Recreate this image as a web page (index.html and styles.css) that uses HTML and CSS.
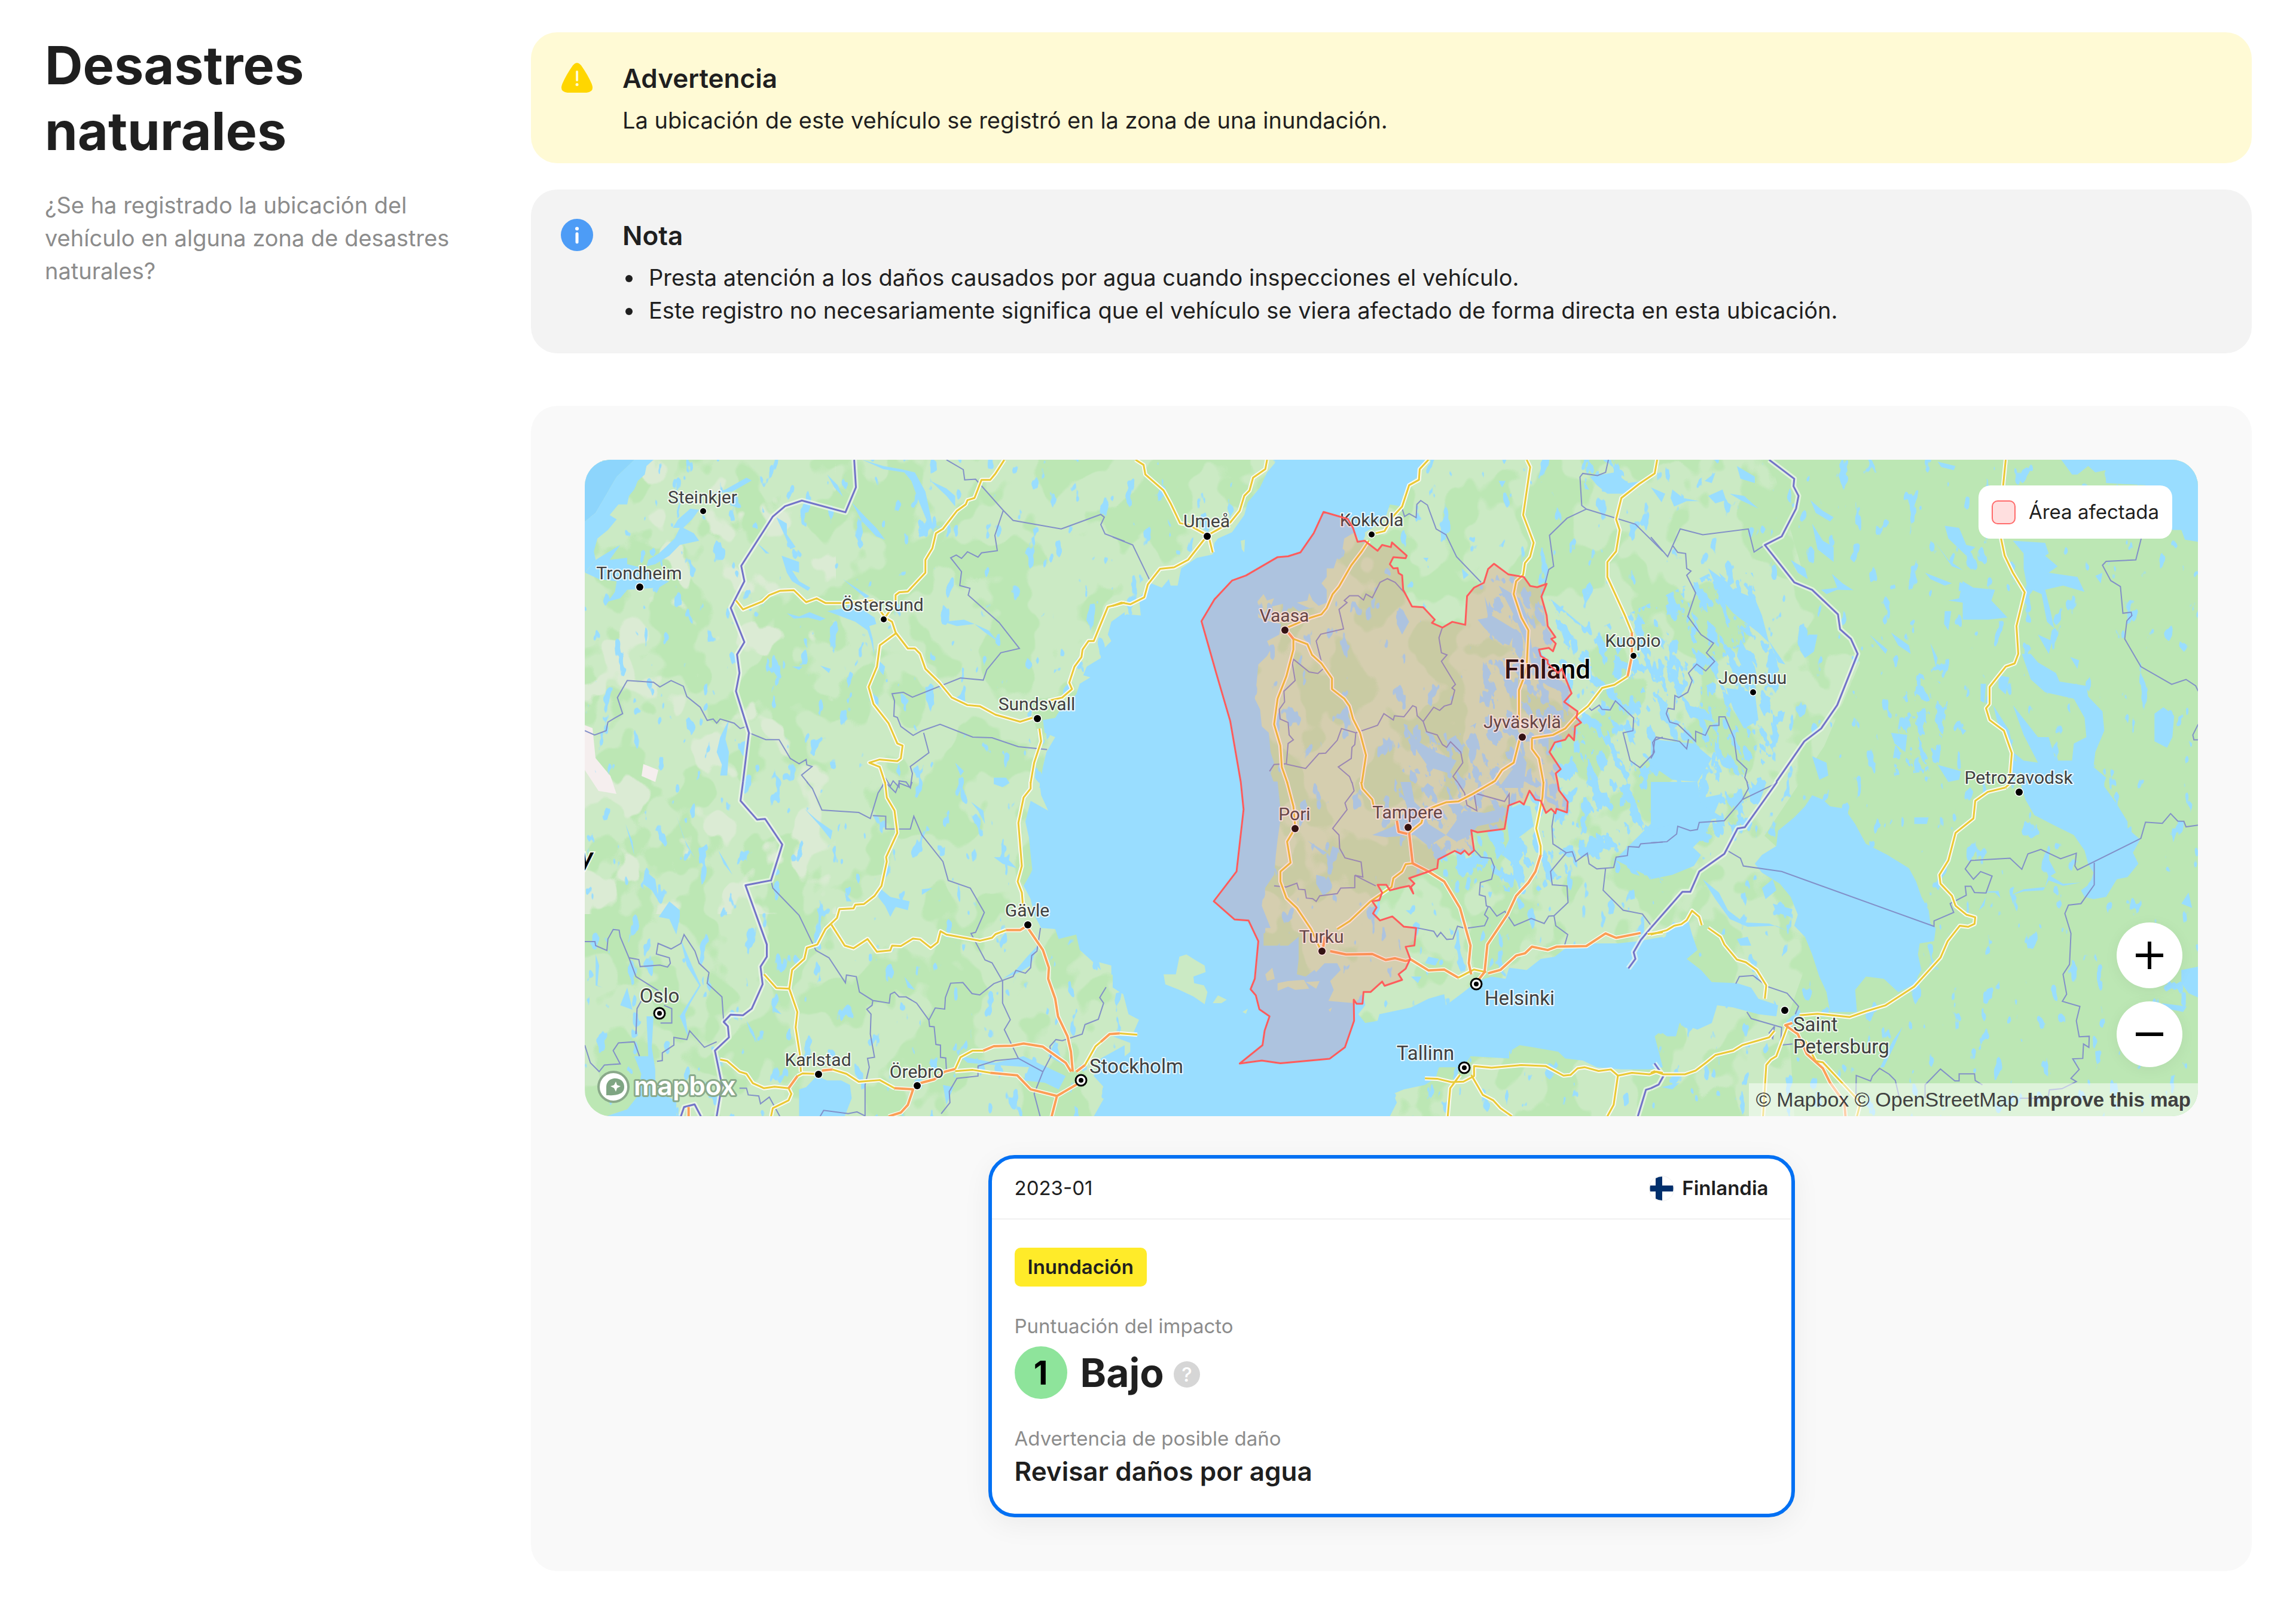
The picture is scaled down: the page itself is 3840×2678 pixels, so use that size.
FILE: index.html
```html
<!DOCTYPE html>
<html lang="es">
<head>
<meta charset="utf-8">
<meta name="viewport" content="width=device-width, initial-scale=1">
<title>Desastres naturales</title>
<link rel="stylesheet" href="styles.css">
</head>
<body>
<main class="section">
  <header class="intro">
    <h1 class="intro-title">Desastres naturales</h1>
    <p class="intro-text">¿Se ha registrado la ubicación del vehículo en alguna zona de desastres naturales?</p>
  </header>

  <div class="content">
    <section class="notice notice-warning">
      <svg class="notice-icon" viewBox="0 0 54 54" aria-hidden="true">
        <path d="M20 6.500Q27-2 34 6.500Q45 22 51.500 37Q57 51 43 52H11Q-3 51 2.500 37Q9 22 20 6.500Z" fill="#ffd600"/>
        <path d="M27 17v14" stroke="#fffad5" stroke-width="4" stroke-linecap="round"/>
        <circle cx="27" cy="38.500" r="2.500" fill="#fffad5"/>
      </svg>
      <div class="notice-body">
        <h2 class="notice-title">Advertencia</h2>
        <p class="notice-text">La ubicación de este vehículo se registró en la zona de una inundación.</p>
      </div>
    </section>

    <section class="notice notice-info">
      <svg class="notice-icon" viewBox="0 0 54 54" aria-hidden="true">
        <circle cx="27" cy="27" r="27" fill="#4d9cf6"/>
        <circle cx="27" cy="16.500" r="3" fill="#fff"/>
        <path d="M27 25v14" stroke="#fff" stroke-width="5" stroke-linecap="round"/>
      </svg>
      <div class="notice-body">
        <h2 class="notice-title">Nota</h2>
        <ul class="notice-list">
          <li>Presta atención a los daños causados por agua cuando inspecciones el vehículo.</li>
          <li>Este registro no necesariamente significa que el vehículo se viera afectado de forma directa en esta ubicación.</li>
        </ul>
      </div>
    </section>

    <section class="panel">
      <div class="map">
        <svg class="map-canvas" viewBox="977 771 2698 1098" preserveAspectRatio="xMidYMid slice" role="img" aria-label="Mapa del área afectada">
          <defs>
            <filter id="forest" x="0" y="0" width="1" height="1" color-interpolation-filters="sRGB">
              <feTurbulence type="fractalNoise" baseFrequency="0.011 0.010" numOctaves="3" seed="4"/>
              <feColorMatrix values="0 0 0 0 .737  0 0 0 0 .906  0 0 0 0 .706  26 0 0 0 -13.200"/>
            </filter>
            <filter id="pale" x="0" y="0" width="1" height="1" color-interpolation-filters="sRGB">
              <feTurbulence type="fractalNoise" baseFrequency="0.013 0.011" numOctaves="3" seed="21"/>
              <feColorMatrix values="0 0 0 0 .859  0 0 0 0 .922  0 0 0 0 .831  24 0 0 0 -14.200"/>
            </filter>
            <filter id="lakes-few" x="0" y="0" width="1" height="1" color-interpolation-filters="sRGB">
              <feTurbulence type="fractalNoise" baseFrequency="0.042 0.022" numOctaves="3" seed="9"/>
              <feColorMatrix values="0 0 0 0 .6  0 0 0 0 .867  0 0 0 0 1  34 0 0 0 -23.200"/>
            </filter>
            <filter id="lakes-many" x="0" y="0" width="1" height="1" color-interpolation-filters="sRGB">
              <feTurbulence type="fractalNoise" baseFrequency="0.060 0.030" numOctaves="4" seed="14"/>
              <feColorMatrix values="0 0 0 0 .6  0 0 0 0 .867  0 0 0 0 1  34 0 0 0 -18.900"/>
            </filter>
            <clipPath id="lakeland">
              <path d="M2600 1010L2660 1060L2780 1000L2860 960L2930 960L2960 1080L2990 1170L2960 1290L2930 1380L2880 1430L2820 1440L2780 1480L2660 1440L2560 1500L2440 1480L2400 1440L2370 1380L2330 1330L2340 1210L2420 1240L2470 1210L2490 1000L2560 980Z"/>
              <path d="M2640 771H2730L2720 830L2650 820ZM3190 1120L3260 1150L3240 1290L3160 1300Z"/>
            </clipPath>
            <clipPath id="karelia"><path d="M2640 1400L2930 1310L2960 1330L2880 1440L2820 1500L2760 1490Z"/></clipPath>

            <g id="roads-main">
              <g transform="matrix(.5867 0 0 .3571 960 760)">
                <path d="M1225 31L1200 95 1185 125 1160 125 1140 210 1120 220 1115 240 1090 270 1050 355 1030 375 1020 445 1000 500 1000 560 950 648 925 652 915 665 915 700 885 770 905 790 915 840 950 915 970 915 985 940 1000 1010 1040 1075 1075 1145 1120 1180 1155 1185 1200 1225 1270 1258 1305 1240"/>
                <path d="M460 690L480 732 535 695 555 665 585 645 625 642 660 698 690 680 715 702 770 702 850 690 885 770M915 845L870 900 862 1000 838 1095 852 1175 895 1265 920 1360 935 1370 930 1430 920 1443 870 1435 840 1450 870 1470 885 1545"/>
                <path d="M1568 700L1540 712 1520 720 1500 800 1480 880 1465 880 1448 920 1445 955 1425 1000 1410 1075 1418 1105 1390 1145 1350 1160M1325 1290L1330 1350 1310 1450 1300 1545"/>
              </g>
              <g transform="matrix(.5867 0 0 .3699 960 1310)">
                <path d="M885 0L890 70 912 130 920 230 888 340 890 360 875 470 855 515 825 552 800 555 795 572 755 575 748 615 715 665 692 735 662 750 655 800 620 850 612 935 635 1040 630 1110 642 1230 645 1310"/>
                <path d="M732 645L770 740 795 752 835 710 862 768 900 762 905 740 930 742 965 708 985 712 1015 750 1035 725 1043 675 1060 690 1155 718 1190 705 1200 688 1230 670M1300 0L1300 30 1280 70 1265 185 1275 380 1263 450 1275 500 1280 600M540 870L575 932 612 935"/>
                <path d="M415 1255L435 1262 470 1310 490 1320 508 1362 540 1385 570 1378 610 1385 618 1410 610 1440 565 1475 560 1512M635 1330L650 1318 690 1320M735 1300L775 1320 810 1356 870 1348 912 1385M1085 1298L1100 1245 1135 1215 1165 1215M1085 1308L1135 1302 1185 1315M1455 1280L1485 1195 1500 1175"/>
              </g>
              <g transform="matrix(.5867 0 0 .3571 1860 760)">
                <path d="M440 31L435 75 400 115 390 175 375 200 362 270 335 325 270 385 215 500 175 535 135 542 100 615 90 675 50 708 25 700 0 715M65 31L88 55 93 100 145 175 165 235 192 328 215 335 265 380M275 400L285 465"/>
                <path d="M900 31L875 75 873 125 845 150 825 250 800 295 775 365 750 375M730 410L710 460 680 525 645 625 627 660 610 725 595 755 565 770 500 815"/>
                <path d="M515 870L515 920 495 1045 470 1150 460 1270 478 1370 482 1470 498 1545M515 870L555 895 568 945 595 985 625 1055 625 1105 660 1150 675 1185 685 1245 705 1310 722 1415 710 1545"/>
                <path d="M1180 31L1190 65 1170 290 1200 420 1190 485 1175 515 1170 570 1150 600 1143 660 1165 770 1185 830 1180 1000 1170 1060 1158 1110 1158 1290M1160 1340L1143 1450 1110 1485 1090 1535 1080 1545M1195 1335L1195 1385 1215 1430 1228 1545M1195 1335L1255 1320 1290 1290 1325 1225 1355 1185 1395 1100 1430 1085 1468 1045"/>
                <path d="M1480 840L1460 760 1410 580 1410 510 1435 460 1445 360 1435 310 1450 210 1500 145 1545 95 1552 31"/>
              </g>
              <g transform="matrix(.5867 0 0 .3699 1860 1310)">
                <path d="M497 0L515 110 520 200 512 230 497 270 507 365 478 405 478 450 495 525 525 570 565 665 590 750M708 0L712 30 740 80 745 120M845 230L880 185 890 130 920 110 950 92 985 88 1025 55 1085 0M1228 0L1225 70 1207 210 1220 290 1220 330"/>
                <path d="M855 368L835 372 825 405 800 435 795 475 735 540 675 630 640 665M985 885L1030 848 1065 860M1525 688L1568 680M20 1137L70 1143"/>
                <path d="M890 1340L925 1342 965 1357 1000 1355 1030 1330 1030 1285 1080 1292 1165 1280 1235 1285 1285 1328 1305 1325 1325 1295 1345 1290 1385 1307 1420 1300 1440 1328 1480 1315 1530 1322 1550 1310 1568 1315M990 1325L962 1385 955 1512M1022 1325L1055 1415 1085 1440 1105 1475 1138 1512M1440 1328L1428 1460 1410 1512"/>
              </g>
              <g transform="matrix(.5995 0 0 .3571 2760 760)">
                <path d="M990 31L983 150 977 400 987 480 1010 560 1043 652 1020 810 1025 940 1015 985 990 1000 945 1095 945 1175 935 1195 945 1250 985 1300 1007 1405 1000 1550 990 1565"/>
              </g>
              <g transform="matrix(.5995 0 0 .3699 2760 1310)">
                <path d="M990 25L940 45 905 85 900 165 850 230 830 355 805 420 808 460 840 515 850 560 880 600 905 612 903 642 885 655 862 650 828 720 808 795 735 925 655 1010 600 1037 555 1063 465 1048 415 1055"/>
                <path d="M0 690L45 670 65 650 85 643 100 625 115 582 135 610 142 648M160 660L195 700 205 735 240 803 265 815 295 850 322 920 318 980M380 1110L350 1240 335 1255 322 1280 313 1512M345 1125L330 1155 255 1190 230 1215 180 1235 155 1268 125 1305 95 1322 35 1322 10 1308 0 1315M430 1170L460 1262 480 1268 585 1450 575 1512"/>
              </g>
            </g>

            <g id="roads-motorway">
              <g transform="matrix(.5867 0 0 .3699 960 1310)">
                <path d="M1230 670L1270 670 1290 650M1292 660L1335 760 1352 840 1350 890 1370 980 1378 1060 1405 1150 1415 1220 1420 1310M610 1385L635 1330M705 1305L735 1300M912 1385L965 1390 950 1460 930 1495 895 1512M985 1362L1025 1345 1055 1310 1085 1298M1165 1215L1195 1195 1245 1193 1280 1183 1335 1197 1400 1270 1415 1310M1185 1315L1262 1327 1300 1390 1375 1420 1440 1360M1375 1420L1360 1512M1430 1310L1455 1280M1500 1175L1525 1140 1554 1137M325 1512L325 1470"/>
              </g>
              <g transform="matrix(.5867 0 0 .3571 1860 760)">
                <path d="M500 840L515 870M1468 1045L1480 950 1480 840"/>
              </g>
              <g transform="matrix(.5867 0 0 .3699 1860 1310)">
                <path d="M810 175L815 225 840 235M845 230L855 368 900 405 945 450 990 570 1020 740 1015 820 1022 870M1220 330L1205 405 1185 455 1150 515 1125 600 1068 735 1060 860 1035 910M605 700L600 745M620 765L665 780 740 778 778 805 805 797 835 810 850 803 900 852 945 848 985 885M1070 865L1105 850 1150 785 1175 775 1195 745 1240 760 1265 745 1350 742 1405 685 1435 705 1505 683"/>
              </g>
              <g transform="matrix(.5995 0 0 .3699 2760 1310)">
                <path d="M395 1090L375 1100 410 1140 435 1230 480 1295 500 1360 540 1450 543 1512"/>
              </g>
            </g>

            <g id="national">
              <path transform="matrix(.5867 0 0 .3571 960 760)" d="M797 31L802 160 772 277 648 222 600 248 565 297 475 528 484 600 445 725 484 885 463 943 470 1030 460 1115 497 1310 480 1540"/>
              <path transform="matrix(.5867 0 0 .3699 960 1310)" d="M480 0L473 85 520 170 543 167 592 283 560 445 487 467 548 735 548 790 530 835 536 915 505 1025 480 1055 445 1052 425 1085 437 1105 440 1155 400 1215 420 1370 405 1512M303 1512L312 1470 342 1458 360 1512"/>
              <path transform="matrix(.5995 0 0 .3571 2760 760)" d="M330 31L400 120 398 155 412 200 405 260 365 390 318 430 400 605 450 640 522 755 528 825 558 870 577 940 520 1180 475 1290 428 1350 350 1540"/>
              <path transform="matrix(.5995 0 0 .3699 2760 1310)" d="M352 0L262 205 242 210 205 325 135 405 110 497 88 497 0 660M10 1272L35 1330 22 1368 0 1385"/>
              <path transform="matrix(.5867 0 0 .3699 1860 1310)" d="M1534 660L1505 715 1485 770 1490 800 1470 843M1534 1385L1520 1392 1497 1512"/>
            </g>
          </defs>

          <rect class="land" x="977" y="771" width="2698" height="1098"/>
          <path class="forest" d="M2960 771H3676V1869H3000L2990 1700L3060 1500L2950 1400L3050 1250L3110 1110L3020 980Z"/>
          <rect filter="url(#forest)" x="977" y="771" width="2698" height="1098"/>
          <rect filter="url(#pale)" x="977" y="771" width="420" height="760"/>
          <path class="snow" d="M977 1215L990 1220L995 1270L1020 1300L1030 1330L1000 1325L977 1290ZM1075 1280L1100 1290L1095 1310L1072 1300Z"/>
          <rect filter="url(#lakes-few)" x="977" y="771" width="2698" height="1098"/>
          <g clip-path="url(#lakeland)"><g transform="rotate(-18 2640 1240)"><rect filter="url(#lakes-many)" x="2100" y="600" width="1300" height="1200"/></g></g>
          <g clip-path="url(#karelia)"><path class="water" d="M2700 1440L2760 1380L2830 1340L2880 1330L2850 1400L2810 1440L2760 1470Z"/></g>

          <g class="water">
            <g transform="matrix(.5867 0 0 .3571 960 760)">
              <path class="deep" d="M29 31H170L120 110 60 280 29 320Z"/>
              <path d="M225 31L205 60 200 100 180 130 170 170 155 200 150 240 125 240 100 290 120 310 95 360 65 400 55 460 60 500 29 560 29 320 60 280 120 110 170 31Z"/>
              <path d="M330 260L355 265 335 310 310 350 340 375 355 410 300 430 270 480 230 520 205 530 210 500 240 470 260 440 285 400 300 350 280 350 295 310ZM60 500L130 430 100 500 150 490 150 520 200 540 230 590 270 600 240 630 150 640 130 680 95 695 115 650 120 600 70 590 30 560ZM430 170L490 115 505 128 450 180 390 190Z"/>
              <path d="M1568 745L1530 790 1520 850 1530 880 1500 930 1500 960 1460 1000 1450 1040 1470 1050 1440 1080 1430 1130 1400 1180 1385 1200 1370 1240 1335 1250 1340 1310 1370 1330 1345 1400 1335 1470 1325 1568H1568Z"/>
              <path d="M720 740L790 720 790 700 855 770 860 800 840 810 850 870 855 950 845 880 835 830 800 790ZM590 480L640 510 640 560 620 550 640 600 672 630 665 645 620 600 605 560ZM860 960L885 1000 880 1040 900 1080 870 1020ZM765 590L840 670 830 680ZM820 31L880 60 930 75 970 90 1000 180 1025 370 1010 340 980 220 960 130 940 90 880 75ZM1015 130L1060 165 1085 200 1085 250 1060 200ZM575 300L605 330 605 380 630 440 615 450 600 390ZM790 230L830 300 860 350 885 405 860 390 820 320ZM520 420L555 470 545 470ZM605 750L640 765 670 745 715 775 700 785 665 770 625 775ZM1050 790L1110 780 1140 800 1090 810ZM1140 800L1180 830 1205 880 1170 840ZM720 100L750 150 765 205 740 160ZM440 1250L430 1340 440 1400 435 1510 415 1510 420 1460 405 1400 415 1330 430 1280ZM1195 1520L1230 1520 1240 1545 1220 1565 1195 1550ZM1085 1450L1110 1490 1100 1510ZM700 995L730 1010 725 1030ZM620 1000L650 1000 640 1015Z"/>
            </g>
            <g transform="matrix(.5867 0 0 .3699 960 1310)">
              <path d="M1325-2L1330 60 1350 130 1300 85 1285 180 1295 250 1300 330 1305 400 1280 470 1300 530 1310 600 1330 660 1370 665 1380 710 1430 690 1440 760 1475 810 1500 850 1495 815 1530 830 1530 870 1568 900V-2Z"/>
              <path d="M640 1512L640 1390 660 1380 690 1330 720 1350 760 1350 785 1370 790 1430 770 1512ZM205 1060L225 1060 220 1200 230 1300 230 1400 290 1440 290 1512 90 1512 150 1480 180 1420 190 1320 170 1240 210 1240ZM870 480L900 520 955 540 950 580 915 565 900 610 885 560 865 520ZM1568 1190L1500 1250 1480 1330 1520 1400 1480 1512H1568ZM1220 890L1258 850 1290 790 1320 740 1300 830 1270 860ZM1100 1240L1200 1270 1280 1240 1400 1330 1380 1390 1340 1360 1280 1350 1300 1290 1200 1280 1120 1270ZM1350 1240L1370 1170 1385 1240 1420 1300ZM1050 1370L1080 1380 1060 1460ZM270 540L300 580 300 610 290 690 270 620 240 610ZM200 400L230 440 240 540 220 490 195 460ZM300 700L340 850 360 920 330 1000 315 1050 325 1160 300 1060 355 920 320 830ZM150 930L165 1030 130 1010ZM1130 90L1165 130 1170 190 1150 130ZM1195 340L1230 340 1260 390 1220 370ZM990 485L1020 480 990 510ZM655 120L690 170 735 220 730 260 700 200ZM770 500L790 540 775 540ZM410 310L430 360 450 420 425 370ZM290 150L310 250 345 350 320 290ZM145 190L165 270 170 330ZM60 780L70 830 65 920 80 930 60 920ZM490 1080L510 1130 520 1180 500 1130ZM940 880L970 940 950 930ZM560 1000L590 1050 570 1040Z"/>
            </g>
            <g transform="matrix(.5867 0 0 .3571 1860 760)">
              <path d="M470 31L440 90 420 160 385 230 375 290 340 370 300 400 290 420 285 475 240 490 195 540 185 620 165 620 160 590 140 630 110 610 75 680 80 760 40 755 10 780 0 785V1568H465L450 1500 460 1450 450 1400 445 1310 425 1280 420 1200 405 1150 410 1080 415 990 440 950 450 920 440 880 475 850 480 800 450 790 415 770 410 700 430 660 440 690 460 680 450 720 500 700 530 740 580 720 610 700 610 640 595 610 610 580 610 540 630 540 640 490 655 450 660 400 690 370 700 400 720 370 750 340 780 290 790 240 825 250 825 210 840 150 870 110 890 31Z"/>
              <path d="M810 740L825 730 845 790 825 850 810 800ZM1100 620L1160 680 1180 760 1200 960 1230 960 1250 1040 1290 1080 1300 1130 1240 1090 1200 1040 1190 960 1170 860 1150 780ZM1060 670L1080 760 1150 830 1130 900 1100 880 1060 820 1040 780 1070 770ZM1150 1360L1180 1450 1170 1568 1100 1568 1140 1480ZM830 1270L870 1350 920 1400 980 1440 960 1500 900 1470 870 1400ZM1360 110L1430 90 1470 140 1510 130 1470 190 1410 190 1380 150ZM995 540L1015 570 1000 590ZM885 490L900 490 895 510ZM1100 130L1120 130 1110 160Z"/>
            </g>
            <g transform="matrix(.5867 0 0 .3699 1860 1310)">
              <path d="M0-2H470L480 150 470 260 465 330 460 420 430 490 425 560 440 620 450 660 430 660 430 740 500 740 530 700 530 800 525 870 550 880 600 820 640 820 650 850 620 900 630 940 615 990 690 1000 715 960 720 1010 700 1050 720 1090 755 1080 760 1050 850 1020 900 980 945 960 950 1010 1000 950 1040 900 1080 880 1120 890 1130 840 1180 850 1220 800 1260 790 1300 740 1370 730 1440 730 1500 720 1568 700V1120L1545 1150 1560 1240 1568 1290 1530 1300 1450 1300 1380 1290 1340 1260 1290 1250 1270 1220 1200 1200 1160 1190 1130 1220 1130 1250 1020 1240 1000 1290 930 1290 920 1340 890 1370 830 1390 800 1410 810 1450 790 1512H0V1330L20 1260 50 1220 50 1180 0 1150 75 1145 60 1130 75 1075 45 1050 30 960 0 930Z"/>
              <path d="M820 0L850 0 860 90 880 120 900 190 950 240 900 290 860 240 780 250 740 240 800 200 840 120ZM1000 130L1060 140 1110 120 1100 180 1040 200 1020 240 980 270 950 240ZM580 420L605 430 620 490 600 515 580 460ZM555 265L610 320 600 330ZM1120 130L1160 100 1190 110 1200 200 1150 260 1170 330 1150 380 1110 330 1130 260ZM1000 350L1040 330 1060 350 1010 380ZM835 580L860 580 850 600ZM1230 60L1260 80 1270 110 1240 90ZM900 790L930 800 920 830 890 820ZM850 880L880 880 870 910Z"/>
            </g>
            <g transform="matrix(.5995 0 0 .3571 2760 760)">
              <path d="M1145 31L1175 100 1190 100 1220 60 1240 90 1268 80 1270 140 1380 150 1455 360 1480 360 1490 405 1527 415V31Z"/>
              <path d="M1035 940L1060 940 1080 980 1130 1030 1140 1070 1215 1090 1220 1140 1260 1210 1265 1300 1240 1400 1235 1470 1270 1520 1260 1568H1050L1010 1400 1040 1440 1080 1450 1040 1320 1010 1180 1080 1330 1110 1330 1130 1440 1175 1440 1180 1360 1215 1330 1210 1240 1180 1150 1100 1120 1060 1060ZM870 600L900 630 960 640 950 690 995 770 940 780 870 780 870 700 830 690 860 680ZM1010 410L1100 420 1110 470 1100 480 1135 530 1110 560 1190 580 1210 650 1150 620 1100 640 1115 740 1125 820 1105 790 1090 660 1050 630 1040 540 1040 470ZM160 540L210 600 230 640 290 680 310 760 330 890 300 840 230 750 200 690ZM330 880L350 930 375 990 355 980ZM440 850L465 850 455 930 430 960 415 920ZM250 870L290 1000 300 1080 260 1020 240 950ZM445 220L480 270 510 300 500 320 460 280ZM450 330L480 410 510 440 510 510 465 450ZM820 340L860 350 880 430 905 440 880 480 830 400ZM790 410L830 500 870 548 840 530ZM390 500L430 540 438 590 410 560ZM505 565L535 610 565 642 520 640 490 660 475 640 520 630ZM765 560L840 610 820 620 780 590ZM820 740L838 740 830 830 818 800ZM610 850L660 920 655 940ZM670 840L720 900 725 940 690 900ZM780 890L800 960 795 1000ZM1405 1220L1430 1190 1460 1230 1455 1330 1440 1380 1405 1350ZM800 1460L865 1490 860 1530 830 1540ZM450 1420L490 1450 495 1510 470 1530ZM670 1310L715 1320 710 1400 680 1360ZM860 1280L880 1300 870 1320ZM0 160L40 190 30 230ZM60 170L90 210 135 225 100 225 65 250 55 210ZM160 200L200 170 210 220 180 235ZM220 190L260 200 300 260 250 220ZM240 60L290 110 290 140 250 120ZM150 130L180 90 170 140ZM1080 850L1120 880 1110 940ZM1170 955L1195 970 1190 1010ZM1240 575L1260 560 1255 610ZM920 1080L935 1080 930 1170 920 1160ZM970 1040L1000 1050 990 1130 970 1100ZM955 1180L1000 1300 1010 1390 970 1280ZM0 1340L120 1360 170 1430 130 1540 60 1530 0 1460ZM100 1180L150 1200 180 1260 110 1230ZM210 1100L290 1120 300 1250 260 1290 230 1200ZM800 40L850 60 845 80 810 65ZM190 560L210 590 200 600Z"/>
            </g>
            <g transform="matrix(.5995 0 0 .3699 2760 1310)">
              <path d="M0 730L40 700 60 660 105 630 115 690 130 760 100 800 140 850 170 905 240 910 280 930 300 980 355 1010 350 1060 300 1050 230 1020 185 1010 170 1090 130 1120 80 1090 70 1150 45 1150 20 1120 5 1160 20 1240 0 1280Z"/>
              <path d="M450 60L480 80 500 110 540 120 570 190 600 280 660 330 720 390 740 450 755 520 775 580 780 640 795 660 790 720 750 730 745 780 755 850 730 920 690 950 650 890 600 880 570 940 575 1040 500 1040 490 950 470 880 450 780 430 700 400 650 410 600 390 520 360 460 310 410 290 370 310 330 350 290 355 220 400 160 430 110Z"/>
              <path d="M1030-2L1045 80 1070 150 1130 200 1180 240 1210 310 1220 370 1235 410 1225 460 1200 490 1210 520 1235 530 1270 520 1300 440 1330 430 1360 370 1345 320 1365 260 1330 210 1330 180 1300 100 1265 20V-2ZM145 440L190 500 215 580 260 635 330 640 390 680 350 650 270 655 220 620 180 530ZM310 480L340 440 350 490 320 530ZM735 160L775 160 770 190 735 190ZM1095 370L1110 350 1130 410 1110 430ZM1000 515L1040 485 1100 475 1110 420 1150 460 1200 455 1150 470 1110 445 1095 490 1040 495ZM945 495L970 493 975 525 960 500 930 500ZM935 520L930 560 915 580ZM1480 850L1527 835V975L1500 955 1480 910ZM1425 1000L1495 1015 1485 1040 1440 1025ZM640 1290L675 1170 702 1108 680 1190 650 1290ZM1480 550L1500 500 1510 570ZM340 550L395 575 390 610 350 590ZM240 710L270 700 280 740 250 740ZM0 0H130L140 100 200 160 130 180 60 190 0 220ZM0 240L100 270 140 330 120 380 60 420 0 440ZM30 1380L80 1360 60 1390Z"/>
            </g>
          </g>

          <g class="islands">
            <g transform="matrix(.5867 0 0 .3699 1860 1310)">
              <path d="M190 790L210 780 240 810 262 830 265 860 230 880 232 910 260 920 270 950 262 1005 230 970 190 940 150 915 145 870 180 870ZM285 1000L300 965 325 985 310 1000ZM370 1040L385 1025 380 1048ZM0 930L20 950 0 960Z"/>
              <path d="M435 870L455 840 462 890 440 900ZM470 910L500 900 545 895 560 935 520 940 500 925 470 945ZM550 905L590 900 580 935ZM555 810L600 790 610 810 580 860ZM615 1030L625 1020 620 1040Z"/>
            </g>
            <g transform="matrix(.5867 0 0 .3571 1860 760)">
              <path d="M525 700L555 690 560 655 570 690 590 720 560 725ZM365 410L377 405 375 465 368 450Z"/>
            </g>
          </g>

          <g class="admin">
            <path transform="matrix(.5867 0 0 .3571 960 760)" d="M29 1300L57 1320 90 1300 95 1260 115 1240 137 1220 122 1145 150 1065 225 1073 243 1095 275 1065 310 1092 320 1140 358 1190 378 1252 395 1245 405 1265 415 1245 455 1265 472 1290 490 1280M497 1310L545 1342 583 1342 615 1430 640 1455 660 1435 662 1460 677 1468 647 1508 665 1545M1060 31L1108 77 1112 125 1143 122 1222 268 1250 315 1387 355 1500 287 1510 300 1500 335 1512 378 1568 413M1222 268L1198 385 1205 457 1160 467 1150 487 1120 462 1103 493 1088 477 1072 490 1103 555 1098 620 1127 633 1122 665 1210 793 1268 915 1215 935 1175 1015 1165 1063 1100 1053 963 1143 937 1120 905 1127 912 1160 910 1232 920 1238 930 1280 965 1322 990 1300 1042 1270 1135 1330 1190 1333 1265 1375 1347 1388M995 1310L1010 1403 957 1468 963 1500 957 1568 945 1540 925 1535 925 1565 908 1535 900 1560 887 1525 875 1568"/>
            <path transform="matrix(.5867 0 0 .3699 960 1310)" d="M662 0L678 30 705 127 810 138 843 165 865 50 885 0 915 48 925 5 957 25 962 0M850 152L887 155 887 212 957 213 967 155 990 240 1050 360 1065 445 1128 480 1168 590 1143 680 1130 685 1170 805 1190 818 1220 900 1220 1000 1242 1075 1225 1120 1265 1250 1335 1310M560 445L565 480 640 603 688 762 725 795 772 908 775 873 803 880 812 950 850 988 897 1000 900 960 912 950 925 972 945 972 975 1000 1010 1077 1028 1022 1055 1027 1057 975 1072 910 1107 907 1133 957 1155 963 1195 912 1250 880 1258 852 1285 865 1300 840 1303 785 1318 765 1328 660M1010 1077L1012 1105 1025 1107 1030 1187 1043 1190 1043 1245 1058 1248 1060 1305M850 988L848 1010 833 1028 845 1050 843 1140 855 1245 835 1250 840 1290 828 1370 828 1512M1515 928L1497 975 1508 1000 1493 1073 1455 1097 1447 1140 1390 1170 1372 1165 1355 1195 1358 1240 1335 1310 1310 1410 1327 1512M29 722L58 722 60 740 92 762 95 710 110 667 127 670 130 700 155 795 175 880 240 945M155 795L183 803 187 835 243 828 265 837 273 820 270 795 233 778 238 730 275 755 303 730 312 690 343 765 355 820 383 862 378 910 420 972 425 1085M190 990L178 1025 175 1140M245 1090L277 1090 277 1025 255 1010M29 1190L45 1270 70 1310 85 1280 130 1275 110 1215 125 1180 170 1175 185 1240M235 1263L250 1260 250 1225 283 1190 283 1155 320 1165 328 1125 370 1200 405 1175M1265 1250L1200 1260 1150 1285 1150 1330 1090 1340 1068 1400 1070 1450 1045 1500M470 1385L490 1385 495 1415 525 1420 530 1455 555 1425 585 1512M700 1512L710 1485 780 1500 805 1492 828 1510"/>
            <path transform="matrix(.5867 0 0 .3571 1860 760)" d="M0 393L57 430 108 603M825 260L832 297 845 283 865 302 867 240 878 222 897 243 922 355 950 382 980 485 1050 605M1413 31L1405 90 1382 105 1340 95 1332 112 1337 245 1350 262 1295 305 1245 385 1257 530 1243 545 1232 615M1350 262L1490 333 1568 460M835 660L805 605 783 588 762 605 740 677 722 660 715 688 700 668 675 668 660 690 668 700 645 732 658 823 593 848 580 880 600 1010 585 1032 560 1025 515 965 512 985 520 1065 488 1115 490 1165 475 1200 477 1245 500 1262 503 1320 515 1343 500 1360 495 1455 460 1458 447 1490M495 1457L550 1477 588 1407 607 1405 640 1345 652 1290 693 1310 690 1365 682 1378 680 1430 643 1470 675 1515 682 1545M693 1310L755 1275 773 1220 800 1250 803 1230 830 1235 855 1183 865 1190 868 1230 885 1257 895 1305 925 1320 940 1365 952 1378 963 1352 992 1400 998 1450 970 1515 985 1545M885 1257L915 1190 932 1205 945 1185 965 1175 975 1110 967 1100 977 1083 937 975 953 945 937 935 930 865 940 815M1330 1225L1355 1187 1365 1205 1387 1180 1395 1200 1418 1203 1433 1160 1485 1240 1483 1300 1455 1310 1475 1440 1503 1473 1540 1410 1545 1345 1568 1330"/>
            <path transform="matrix(.5867 0 0 .3699 1860 1310)" d="M682 0L688 40 662 95 668 125 627 210 645 240 647 300 662 343 708 362 713 430 690 422 750 470M690 422L690 478 650 480 640 505 590 515 580 540 570 528 552 525 548 487 530 485 525 458 495 475 460 470M985 5L1003 50 1010 105 1038 130 1030 50 1117 88 1130 55 1130 105M1030 305L1050 340 1078 345 1088 385 1080 440 1048 455 1045 510 1062 518 1065 560 1075 565 1095 607 1118 585 1145 650 1193 617 1230 640 1243 607 1258 605 1298 545 1295 470 1253 465 1248 405 1293 320 1255 280 1252 200 1258 140M1293 320L1310 315 1320 360 1353 322 1358 370 1380 393 1428 387 1435 340 1467 333 1470 292 1500 295 1505 280 1568 272M1405 390L1398 490 1455 580 1510 597 1535 650M1258 605L1263 650 1297 690 1287 745M868 660L915 675 925 700 935 680 952 712 970 710 983 652 1005 662 1060 650 1070 615 1060 600 1070 565"/>
            <path transform="matrix(.5995 0 0 .3571 2760 760)" d="M0 393L47 485 82 355 145 382 272 355 288 463 318 430M62 435L75 465 97 470 100 540 112 552 100 572 125 655 103 765 140 850 175 890 155 935 178 975 153 1020 128 988 105 1030 115 1065 103 1120 78 1145 67 1135 65 1200 48 1195 43 1220 53 1260 75 1270 125 1350 125 1303 152 1322 165 1277 190 1275 190 1235 207 1235 232 1335 240 1435 268 1480 262 1520 270 1545M0 1430L10 1400 5 1355 15 1330 80 1350 100 1385 105 1340M1368 400L1353 500 1270 507 1260 525 1283 597 1310 625 1317 750 1340 745 1342 760 1328 785 1322 870 1367 1000 1453 1083 1493 1060 1520 1090 1527 1115M1527 1270L1512 1320 1515 1343 1527 1343"/>
            <path transform="matrix(.5995 0 0 .3699 2760 1310)" d="M268 0L272 30 255 80M0 275L45 270 72 235 75 200 110 220 130 215 135 183 205 175 255 80 345 10M213 310L250 345 258 380 365 405 790 653 790 628 845 590 835 550 880 512 877 472 893 472 903 500 935 502 952 425 920 405 900 440 877 393 893 355 1002 345 1035 395 1052 325 1088 305 1143 347 1187 322 1183 380 1190 398 1367 255 1380 182 1427 187 1450 143 1470 177 1487 178 1493 203 1527 195M1237 365L1237 465 1200 550 1165 557 1155 595 1172 685 1168 825 1150 870 1160 960 1148 992 1197 1015 1187 1080 1195 1152 1223 1150 1222 1200 1207 1185 1205 1250 1177 1252 1195 1300 1172 1340 1187 1355 1147 1387 1112 1392 1108 1430 1030 1430M237 912L247 880 285 875 325 925 380 955 412 1015 403 1050M268 1040L280 1070 365 1110 362 1190 395 1185M345 1105L330 1135 340 1160 345 1105M572 1440L573 1327 613 1352 618 1330 638 1295 665 1322 682 1350 695 1440M765 1430L765 1370 808 1298 848 1352 860 1352 860 1320 903 1320 905 1350 925 1370"/>
          </g>

          <use href="#national" class="halo"/>
          <use href="#national" class="nation"/>
          <use href="#roads-main" class="casing"/>
          <use href="#roads-motorway" class="casing"/>
          <use href="#roads-main" class="road-main"/>
          <use href="#roads-motorway" class="road-motorway"/>

          <g class="dots">
            <circle cx="1175" cy="857" r="5"/><circle cx="1069" cy="984" r="6"/><circle cx="1477" cy="1038" r="5"/><circle cx="1734" cy="1204" r="6"/><circle cx="2018" cy="899" r="6"/><circle cx="2293" cy="896" r="5"/><circle cx="2148" cy="1056" r="6"/><circle cx="2731" cy="1099" r="5"/><circle cx="2545" cy="1235" r="6"/><circle cx="2165" cy="1388" r="6"/><circle cx="2354" cy="1386" r="6"/><circle cx="2210" cy="1593" r="6"/><circle cx="2931" cy="1160" r="5"/><circle cx="3376" cy="1327" r="6"/><circle cx="2984" cy="1692" r="6"/><circle cx="1368" cy="1799" r="6"/><circle cx="1533" cy="1818" r="6"/><circle cx="1718" cy="1549" r="6"/>
          </g>
          <g class="capital-ring">
            <circle cx="1102" cy="1697" r="9"/><circle cx="1807" cy="1809" r="9"/><circle cx="2468" cy="1648" r="9"/><circle cx="2448" cy="1788" r="9"/>
          </g>
          <g>
            <circle cx="1102" cy="1697" r="4"/><circle cx="1807" cy="1809" r="4"/><circle cx="2468" cy="1648" r="4"/><circle cx="2448" cy="1788" r="4"/>
          </g>

          <g class="city">
            <text x="1174" y="844">Steinkjer</text>
            <text x="1068" y="971">Trondheim</text>
            <text x="1475" y="1024">Östersund</text>
            <text x="1733" y="1190">Sundsvall</text>
            <text x="2017" y="884">Umeå</text>
            <text x="2293" y="882">Kokkola</text>
            <text x="2147" y="1042">Vaasa</text>
            <text x="2730" y="1084">Kuopio</text>
            <text x="2545" y="1220">Jyväskylä</text>
            <text x="2164" y="1374">Pori</text>
            <text x="2353" y="1371">Tampere</text>
            <text x="2209" y="1579">Turku</text>
            <text x="2930" y="1146">Joensuu</text>
            <text x="3375" y="1313">Petrozavodsk</text>
            <text x="1367" y="1785">Karlstad</text>
            <text x="1532" y="1805">Örebro</text>
            <text x="1717" y="1535">Gävle</text>
          </g>
          <g class="city city-large">
            <text x="1102" y="1679">Oslo</text>
            <text class="from-left" x="1821" y="1797">Stockholm</text>
            <text class="from-left" x="2482" y="1683">Helsinki</text>
            <text x="2383" y="1775">Tallinn</text>
            <text class="from-left" x="2998" y="1727">Saint</text>
            <text class="from-left" x="2998" y="1764">Petersburg</text>
          </g>
          <text class="country" x="2587" y="1137">Finland</text>
          <text class="country country-slanted" x="980" y="1452">y</text>

          <path class="affected" transform="matrix(.5867 0 0 .3571 1860 760)" d="M601 275L670 308 685 350 698 415 718 410 755 457 768 430 793 440 796 418 838 480 835 492 800 487 790 520 800 540 812 538 815 562 825 572 828 640 853 718 885 722 918 780 910 795 940 817 968 790 1005 804 1010 670 1030 630 1058 607 1070 543 1087 518 1128 568 1172 580 1190 622 1210 628 1237 612 1222 672 1237 760 1240 810 1262 862 1250 870 1263 892 1255 928 1243 912 1215 920 1220 950 1240 970 1240 985 1270 1030 1280 1010 1308 1125 1287 1165 1325 1210 1322 1240 1335 1262 1318 1280 1315 1345 1300 1318 1290 1342 1260 1355 1245 1400 1277 1480 1263 1500 1268 1540 1272 1579 1297 1633 1295 1683 1265 1666 1262 1687 1250 1666 1235 1685 1220 1628 1205 1623 1188 1581 1172 1646 1160 1631 1128 1651 1117 1760 1040 1776 1022 1766 1030 1861 1015 1882 1003 1861 992 1877 975 1863 928 1903 925 1944 895 1963 845 1991 860 2016 850 2032 857 2063 845 2027 820 2035 790 2048 780 2022 755 2022 768 2058 760 2094 740 2099 752 2128 742 2156 762 2189 797 2170 830 2218 865 2224 860 2306 835 2312 848 2369 835 2415 815 2441 825 2467 775 2495 768 2475 735 2524 715 2524 712 2579 695 2579 687 2560 688 2659 662 2783 618 2837 478 2858 425 2845 362 2859 427 2773 433 2705 447 2638 418 2605 408 2540 393 2511 405 2462 415 2286 387 2189 347 2184 288 2099 353 1959 373 1669 365 1540 335 1255 295 1030 253 787 290 685 340 597 380 573 470 487 500 483 535 465 573 375Z"/>

          <g class="logo">
            <circle cx="1025" cy="1820" r="25" fill="#fff" stroke="#8aa98a" stroke-width="4"/>
            <path d="M1013 1834V1820C1013 1801 1043 1801 1043 1820C1043 1832 1031 1835 1013 1834Z" fill="#7fa583"/>
            <path d="M1029 1811L1031 1817 1037 1819 1031 1822 1029 1828 1026 1822 1020 1819 1026 1817Z" fill="#fff"/>
            <text class="wordmark" x="1059" y="1834">mapbox</text>
          </g>
        </svg>

        <div class="legend"><span class="legend-swatch"></span>Área afectada</div>

        <div class="zoom">
          <button class="zoom-button" type="button" aria-label="Acercar">
            <svg viewBox="0 0 48 48" aria-hidden="true"><path d="M24 1v46M1 24h46" stroke="#000" stroke-width="6"/></svg>
          </button>
          <button class="zoom-button" type="button" aria-label="Alejar">
            <svg viewBox="0 0 48 48" aria-hidden="true"><path d="M1 24h46" stroke="#000" stroke-width="6"/></svg>
          </button>
        </div>

        <div class="attribution">
          <a href="#mapbox">© Mapbox</a> <a href="#osm">© OpenStreetMap</a> <a class="improve" href="#improve">Improve this map</a>
        </div>
      </div>

      <article class="event">
        <header class="event-header">
          <span>2023-01</span>
          <span class="event-country">
            <svg class="flag" viewBox="0 0 44 44" aria-hidden="true">
              <circle cx="22" cy="22" r="21" fill="#fff" stroke="#f0f0f0" stroke-width="1"/>
              <path d="M12 5Q17 2 23 2V17H41Q42 22 41 27H23V42Q17 42 12 39V27H3Q2 22 3 17H12Z" fill="#002f6c"/>
            </svg>
            Finlandia
          </span>
        </header>
        <div class="event-body">
          <span class="tag">Inundación</span>
          <p class="label">Puntuación del impacto</p>
          <div class="score">
            <span class="score-badge">1</span>
            <strong class="score-text">Bajo</strong>
            <button class="help" type="button" aria-label="Ayuda">?</button>
          </div>
          <p class="label">Advertencia de posible daño</p>
          <p class="advice">Revisar daños por agua</p>
        </div>
      </article>
    </section>
  </div>
</main>
</body>
</html>
```
FILE: styles.css
```css
* {
  box-sizing: border-box;
}

body {
  margin: 0;
  background: #fff;
  color: #1f1f1f;
  font-family: Inter, "Liberation Sans", sans-serif;
  font-size: 38px;
  line-height: 55px;
}

h1, h2, p, ul {
  margin: 0;
}

.section {
  display: grid;
  grid-template-columns: 723px minmax(0, 1fr);
  gap: 90px;
  padding: 54px 74px 48px 75px;
}

.intro-title {
  font-size: 88px;
  line-height: 110px;
  font-weight: 700;
}

.intro-text {
  margin-top: 42px;
  color: #8c8c8c;
}

.content {
  display: flex;
  flex-direction: column;
  gap: 44px;
}

/* Notices */
.notice {
  display: flex;
  gap: 49px;
  padding: 44px 50px;
  border-radius: 44px;
}

.notice-warning {
  background: #fffad5;
}

.notice-info {
  background: #f3f3f3;
}

.notice-icon {
  flex: none;
  width: 54px;
  height: 54px;
  margin-top: 5px;
}

.notice-title {
  margin-bottom: 10px;
  font-size: 44px;
  line-height: 66px;
  font-weight: 600;
}

.notice-list {
  padding-left: 36px;
}

.notice-list li {
  padding-left: 8px;
}

/* Map panel */
.panel {
  display: flex;
  flex-direction: column;
  align-items: center;
  gap: 65px;
  margin-top: 44px;
  padding: 90px;
  border-radius: 44px;
  background: #f9f9f9;
}

.map {
  position: relative;
  width: 100%;
  border-radius: 44px;
  overflow: hidden;
}

.map-canvas {
  display: block;
  width: 100%;
  height: auto;
}

.map-canvas path {
  vector-effect: non-scaling-stroke;
}

.land { fill: #cbeac4; }
.forest { fill: #bce7b4; }
.snow { fill: #f5eeee; }
.water { fill: #99ddff; }
.deep { fill: #8dd5fc; }
.islands { fill: #cbeac4; }

.admin {
  fill: none;
  stroke: #8290c8;
  stroke-width: 2;
}

.halo, .nation, .casing, .road-main, .road-motorway {
  fill: none;
  stroke-linejoin: round;
}

.halo { stroke: rgba(240, 246, 240, .7); stroke-width: 9; }
.nation { stroke: #7272c8; stroke-width: 3; }
.casing { stroke: #fbfaf0; stroke-width: 7; }
.road-main { stroke: #e9c935; stroke-width: 3; }
.road-motorway { stroke: #fb9f56; stroke-width: 4; }

.dots {
  stroke: #fff;
  stroke-width: 3;
  paint-order: stroke;
}

.capital-ring {
  fill: #fff;
  stroke: #000;
  stroke-width: 3;
}

.city {
  fill: #404040;
  stroke: rgba(255, 255, 255, .8);
  stroke-width: 4;
  stroke-linejoin: round;
  paint-order: stroke;
  font-family: Roboto, "Liberation Sans", sans-serif;
  font-size: 30px;
  text-anchor: middle;
}

.city-large { font-size: 33px; }
.from-left { text-anchor: start; }

.country {
  fill: #000;
  stroke: rgba(255, 255, 255, .8);
  stroke-width: 4;
  paint-order: stroke;
  font-family: Roboto, "Liberation Sans", sans-serif;
  font-size: 44px;
  font-weight: 500;
  text-anchor: middle;
}

.country-slanted { font-style: italic; }

.affected {
  fill: rgba(255, 95, 95, .2);
  stroke: #ff5c5c;
  stroke-width: 3;
  stroke-linejoin: round;
}

.wordmark {
  fill: #fff;
  stroke: #8aa98a;
  stroke-width: 6;
  stroke-linejoin: round;
  paint-order: stroke;
  font-size: 44px;
  font-weight: 600;
}

.legend {
  position: absolute;
  top: 43px;
  right: 43px;
  display: flex;
  align-items: center;
  gap: 22px;
  padding: 17px 22px;
  border-radius: 20px;
  background: #fff;
  font-size: 33px;
}

.legend-swatch {
  width: 40px;
  height: 40px;
  border: 2px solid #ff6b6b;
  border-radius: 10px;
  background: #ffdfdf;
}

.zoom {
  position: absolute;
  right: 26px;
  bottom: 82px;
  display: flex;
  flex-direction: column;
  gap: 22px;
}

.zoom-button {
  display: grid;
  place-items: center;
  width: 110px;
  height: 110px;
  padding: 0;
  border: 0;
  border-radius: 50%;
  background: #fff;
  box-shadow: 0 4px 24px rgba(0, 0, 0, .05);
}

.zoom-button svg {
  width: 48px;
  height: 48px;
}

.attribution {
  position: absolute;
  right: 0;
  bottom: 0;
  padding: 0 12px;
  background: rgba(255, 255, 255, .5);
  font-family: "Liberation Sans", sans-serif;
  font-size: 34px;
}

.attribution a {
  color: #404040;
  text-decoration: none;
}

.attribution .improve {
  margin-left: 5px;
  font-size: 33px;
  font-weight: 700;
}

/* Event card */
.event {
  width: 50%;
  border: 6px solid #0070f3;
  border-radius: 44px;
  background: #fff;
  box-shadow: 0 12px 48px rgba(0, 0, 0, .06);
}

.event-header {
  display: flex;
  justify-content: space-between;
  padding: 22px 38px 23px;
  border-bottom: 2px solid #f0f0f0;
  font-size: 33px;
}

.event-country {
  display: flex;
  align-items: center;
  gap: 12px;
  font-weight: 600;
}

.flag {
  width: 44px;
  height: 44px;
}

.event-body {
  padding: 47px 38px 38px;
}

.tag {
  display: block;
  width: fit-content;
  padding: 5px 22px;
  border-radius: 10px;
  background: #ffeb29;
  font-size: 33px;
  font-weight: 600;
}

.label {
  margin-top: 44px;
  color: #8c8c8c;
  font-size: 33px;
  line-height: 44px;
}

.score {
  display: flex;
  align-items: center;
  margin-top: 12px;
}

.score-badge {
  display: grid;
  place-items: center;
  width: 88px;
  height: 88px;
  border-radius: 50%;
  background: #8ee49b;
  color: #000;
  font-size: 55px;
  font-weight: 700;
}

.score-text {
  margin-left: 22px;
  font-size: 66px;
  line-height: 88px;
  font-weight: 700;
}

.help {
  width: 44px;
  height: 44px;
  margin: 6px 0 0 16px;
  padding: 0;
  border: 0;
  border-radius: 50%;
  background: #d6d6d6;
  color: #fff;
  font: 500 33px/44px Inter, sans-serif;
}

.advice {
  font-size: 44px;
  line-height: 66px;
  font-weight: 600;
}
```
